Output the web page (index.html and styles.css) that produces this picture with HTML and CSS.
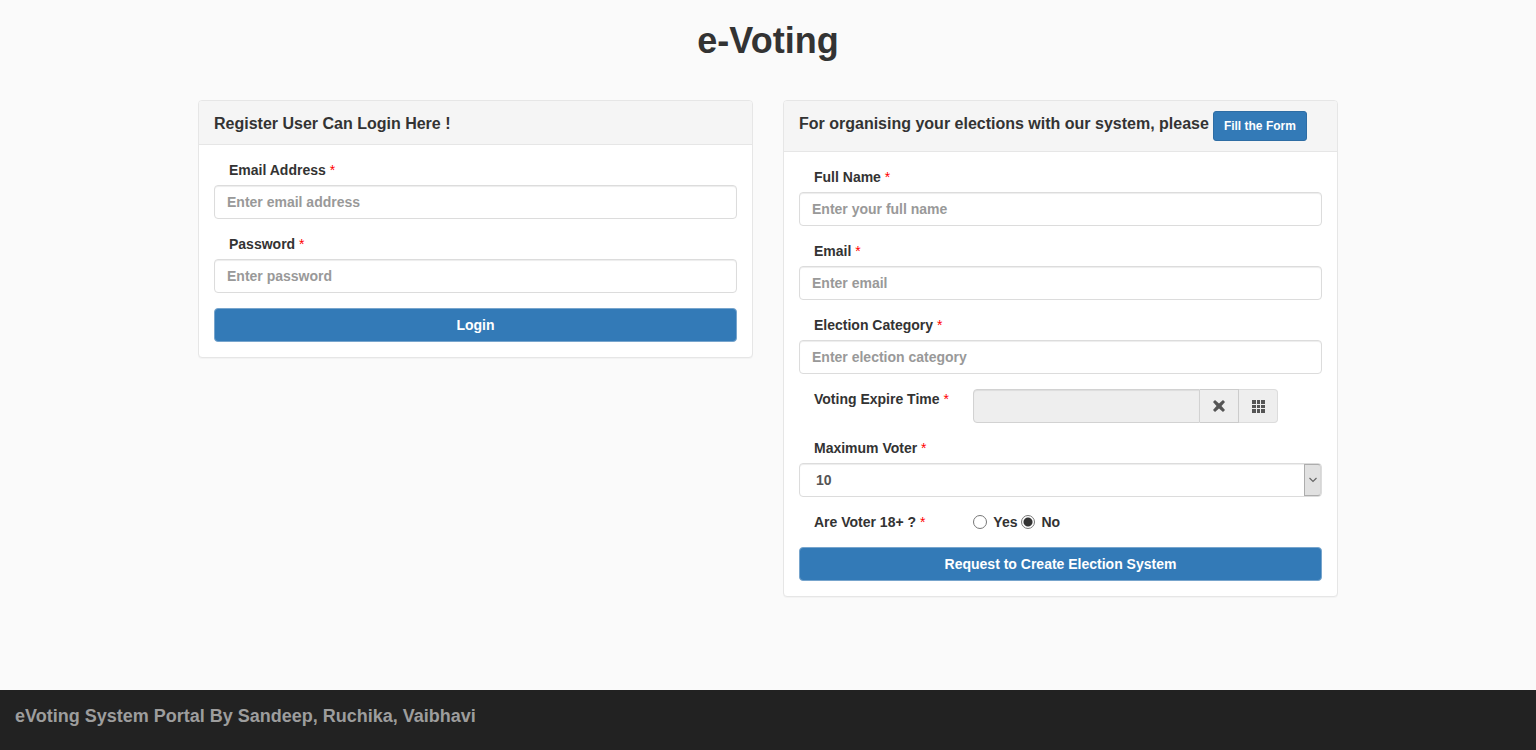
FILE: index.html
```html
<!DOCTYPE html>
<html lang="en">
<head>
<meta charset="utf-8">
<title>e-Voting</title>
<link rel="stylesheet" href="styles.css">
</head>
<body>
<h1 class="site-title">e-Voting</h1>
<main class="container">
  <section class="panel">
    <header class="panel-heading"><h2 class="panel-title">Register User Can Login Here !</h2></header>
    <form class="panel-body">
      <div class="form-group">
        <label class="label" for="login-email">Email Address <span class="required">*</span></label>
        <input class="control" id="login-email" type="email" placeholder="Enter email address">
      </div>
      <div class="form-group">
        <label class="label" for="login-password">Password <span class="required">*</span></label>
        <input class="control" id="login-password" type="password" placeholder="Enter password">
      </div>
      <button class="btn btn-block" type="submit">Login</button>
    </form>
  </section>
  <section class="panel">
    <header class="panel-heading">
      <h2 class="panel-title">For organising your elections with our system, please</h2>
      <button class="btn btn-small" type="button">Fill the Form</button>
    </header>
    <form class="panel-body">
      <div class="form-group">
        <label class="label" for="name">Full Name <span class="required">*</span></label>
        <input class="control" id="name" type="text" placeholder="Enter your full name">
      </div>
      <div class="form-group">
        <label class="label" for="email">Email <span class="required">*</span></label>
        <input class="control" id="email" type="email" placeholder="Enter email">
      </div>
      <div class="form-group">
        <label class="label" for="category">Election Category <span class="required">*</span></label>
        <input class="control" id="category" type="text" placeholder="Enter election category">
      </div>
      <div class="form-row">
        <label class="label" for="expire">Voting Expire Time <span class="required">*</span></label>
        <div class="input-group">
          <input class="control control-date" id="expire" type="text" readonly>
          <button class="addon addon-clear" type="button" aria-label="Clear date">
            <svg width="14" height="14" viewBox="0 0 14 14"><path fill="#555" d="M3 1 7 4.500 11 1l2 2-3.500 4L13 11l-2 2-4-3.500L3 13l-2-2 3.500-4L1 3z"/></svg>
          </button>
          <button class="addon addon-pick" type="button" aria-label="Choose date">
            <svg width="14" height="14" viewBox="0 0 14 14" fill="#555" shape-rendering="crispEdges"><path d="M1 1h4v4H1zM6 1h3v4H6zM10 1h4v4h-4zM1 6h4v3H1zM6 6h3v3H6zM10 6h4v3h-4zM1 10h4v4H1zM6 10h3v4H6zM10 10h4v4h-4z"/></svg>
          </button>
        </div>
      </div>
      <div class="form-group">
        <label class="label" for="max">Maximum Voter <span class="required">*</span></label>
        <div class="select">
          <select class="control control-select" id="max"><option>10</option></select>
          <span class="select-arrow"><svg width="8" height="6" viewBox="0 0 8 6"><path d="M.5 1 4 4.500 7.500 1" fill="none" stroke="#666" stroke-width="1.200"/></svg></span>
        </div>
      </div>
      <div class="form-row" role="radiogroup" aria-labelledby="adult">
        <span class="label" id="adult">Are Voter 18+ ? <span class="required">*</span></span>
        <div class="radios">
          <label class="radio-label"><input class="radio" type="radio" name="adult">Yes</label>
          <label class="radio-label"><input class="radio" type="radio" name="adult" checked>No</label>
        </div>
      </div>
      <button class="btn btn-block" type="submit">Request to Create Election System</button>
    </form>
  </section>
</main>
<footer class="footer">eVoting System Portal By Sandeep, Ruchika, Vaibhavi</footer>
</body>
</html>
```
FILE: styles.css
```css
* { box-sizing: border-box; }
body {
  margin: 0;
  min-height: 100vh;
  display: flex;
  flex-direction: column;
  background: #fafafa;
  color: #333;
  font: bold 14px/20px "Liberation Sans", Arial, sans-serif;
}
input, button, select { font: inherit; }
.site-title { margin: 21px 0 39px; text-align: center; font-size: 36px; line-height: 40px; }
.container {
  width: 100%;
  max-width: 1170px;
  margin: 0 auto;
  padding: 0 15px 20px;
  display: grid;
  grid-template-columns: 1fr 1fr;
  gap: 30px;
  align-items: start;
}
.panel { background: #fff; border: 1px solid #e6e6e6; border-radius: 4px; box-shadow: 0 1px 1px rgba(0,0,0,.03); }
.panel-heading {
  display: flex;
  flex-wrap: wrap;
  align-items: flex-start;
  gap: 4px;
  padding: 10px 15px 8px;
  background: #f5f5f5;
  border-bottom: 1px solid #e6e6e6;
  border-radius: 3px 3px 0 0;
}
.panel-title { margin: 0; font-size: 16px; line-height: 25px; }
.panel-body { padding: 15px; }
.form-group, .form-row { margin-bottom: 15px; }
.form-row { display: grid; grid-template-columns: 4fr 7fr 1fr; }
.label { display: block; padding-left: 15px; }
.form-group .label { margin-bottom: 5px; }
.required { color: #f00; font-weight: normal; }
.control {
  display: block;
  width: 100%;
  height: 34px;
  padding: 6px 12px;
  color: #555;
  background: #fff;
  border: 1px solid #dcdcdc;
  border-radius: 4px;
  box-shadow: inset 0 1px 1px rgba(0,0,0,.075);
}
.control::placeholder { color: #999; opacity: 1; }
.input-group { display: flex; }
.control-date { flex: 1; min-width: 0; background: #eee; border-color: #d2d2d2; border-radius: 4px 0 0 4px; }
.addon {
  display: flex;
  align-items: center;
  justify-content: center;
  width: 39px;
  height: 34px;
  padding: 0;
  background: #eee;
  border: 1px solid #ccc;
  border-left: 0;
}
.addon-pick { border-color: #dcdcdc; border-radius: 0 4px 4px 0; }
.select { position: relative; }
.control-select { appearance: none; padding-left: 16px; }
.select-arrow {
  position: absolute;
  inset: 1px 1px 1px auto;
  width: 17px;
  display: flex;
  align-items: center;
  justify-content: center;
  background: #e1e1e1;
  border: 1px solid #adadad;
  border-right-color: #d6d6d6;
  border-radius: 0 3px 3px 0;
  pointer-events: none;
}
.radios { display: flex; gap: 4px; }
.radio-label { display: flex; align-items: center; gap: 6px; }
.radio {
  appearance: none;
  width: 14px;
  height: 14px;
  margin: 0;
  background: #fff;
  border: 1px solid #777;
  border-radius: 50%;
}
.radio:checked { background: radial-gradient(circle, #333 4px, #fff 5px); }
.btn { color: #fff; background: #337ab7; border: 1px solid #2e6da4; border-radius: 4px; }
.btn-block { display: block; width: 100%; height: 34px; padding: 6px 12px; border-color: #77a5cd; }
.btn-small { height: 30px; margin-bottom: 2px; padding: 5px 10px; font-size: 12px; line-height: 18px; border-radius: 3px; }
.footer { margin-top: auto; min-height: 60px; padding: 16px 15px; background: #222; color: #9d9d9d; font-size: 18px; }
```
